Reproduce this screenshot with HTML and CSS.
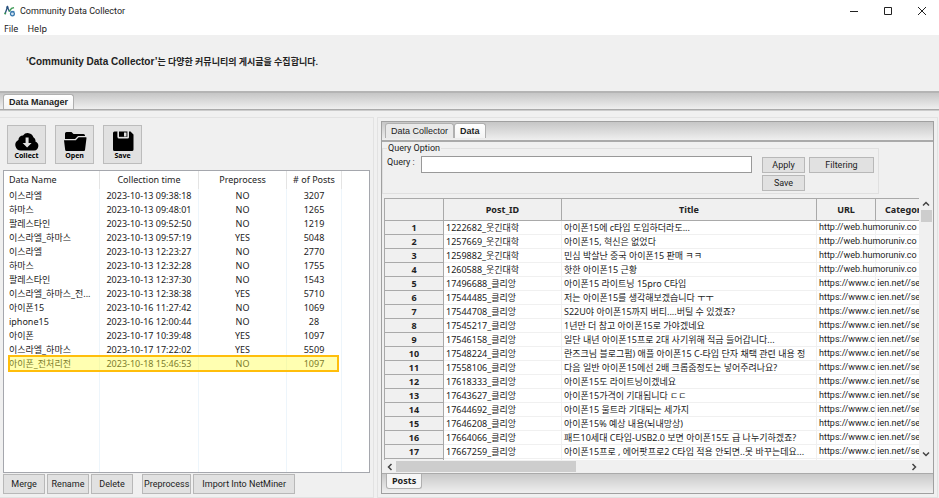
FILE: index.html
```html
<!DOCTYPE html>
<html lang="ko">
<head>
<meta charset="utf-8">
<title>Community Data Collector</title>
<link rel="stylesheet" href="styles.css">
</head>
<body>
<header class="titlebar">
  <svg class="logo" viewBox="0 0 12 12" aria-hidden="true">
    <path d="M1 9 L3.4 2 L5.4 6.6" fill="none" stroke="#27507c" stroke-width="1.3"/>
    <path d="M5 6.500L7.600 3.400 10 2.600" fill="none" stroke="#3d9a55" stroke-width="1.4"/>
    <circle cx="3.4" cy="2.2" r="1.1" fill="#27507c"/>
    <circle cx="1.200" cy="8.600" r="1" fill="#3d9a55"/>
    <circle cx="8.4" cy="8.800" r="2" fill="#cfe2f3" stroke="#3677ac" stroke-width="1.2"/>
    <path d="M6.400 6.400h4" stroke="#3677ac"/>
  </svg>
  <h1 class="app-name">Community Data Collector</h1>
  <div class="window-controls">
    <button type="button" aria-label="Minimize"><svg viewBox="0 0 10 10"><path d="M1 5.5h8"/></svg></button>
    <button type="button" aria-label="Maximize"><svg viewBox="0 0 10 10"><path d="M1.5 1.5h7v7h-7z"/></svg></button>
    <button type="button" aria-label="Close"><svg viewBox="0 0 10 10"><path d="M1 1l8 8M9 1l-8 8"/></svg></button>
  </div>
</header>
<nav class="menu">
  <button type="button">File</button>
  <button type="button">Help</button>
</nav>
<p class="banner"><span class="banner-name">‘Community Data Collector’</span>는 다양한 커뮤니티의 게시글을 수집합니다.</p>
<div class="tabstrip main-tabs">
  <button type="button" class="tab active">Data Manager</button>
</div>
<main class="workspace">
  <section class="manager">
    <div class="toolbar">
      <button type="button" class="tool">
        <svg viewBox="0 0 24 20" aria-hidden="true"><path d="M6 19.5a5.6 5.6 0 0 1-2.600-10.600A4.600 4.600 0 0 1 8 4.400 6 6 0 0 1 18.400 6.200 4 4 0 0 1 20.400 10.500 4.700 4.700 0 0 1 19.300 19.500z"/><path d="M10.600 6.500h3v5.500h3L12.100 16.600 7.600 12h3z" fill="#e1e1e1"/></svg>
        <span>Collect</span>
      </button>
      <button type="button" class="tool">
        <svg viewBox="0 0 24 20" aria-hidden="true"><path d="M2 2.500q0-1.500 1.500-1.500h5l2 2H20.500q1.500 0 1.500 1.500V5H15l-3 3H2zM1 9.200h11.800l2.800-3H23q.6 0 .5.8l-1.500 12q-.1 1-1 1H3.300q-1 0-1.100-1z"/></svg>
        <span>Open</span>
      </button>
      <button type="button" class="tool">
        <svg viewBox="0 0 24 20" aria-hidden="true"><path d="M2 2q0-1.500 1.500-1.500h3V6q0 1.500 1.500 1.500h8.500Q18 7.500 18 6V.5h1.500L22.500 3.500V18.500q0 1.500-1.500 1.500H3.500Q2 20 2 18.500z"/><path d="M8 .5h8.500V6H8z"/><path d="M13 1.500h2.500v4H13z" fill="#e1e1e1"/><path d="M7.200.5v5.800h10V.5" fill="none" stroke="#e1e1e1" stroke-width=".8"/></svg>
        <span>Save</span>
      </button>
    </div>
    <div class="list">
      <table class="datasets">
        <colgroup><col class="c-name"><col class="c-time"><col class="c-pre"><col class="c-posts"><col></colgroup>
        <thead><tr><th>Data Name</th><th>Collection time</th><th>Preprocess</th><th># of Posts</th><th></th></tr></thead>
        <tbody>
          <tr><td>이스라엘</td><td>2023-10-13 09:38:18</td><td>NO</td><td>3207</td><td></td></tr>
          <tr><td>하마스</td><td>2023-10-13 09:48:01</td><td>NO</td><td>1265</td><td></td></tr>
          <tr><td>팔레스타인</td><td>2023-10-13 09:52:50</td><td>NO</td><td>1219</td><td></td></tr>
          <tr><td>이스라엘_하마스</td><td>2023-10-13 09:57:19</td><td>YES</td><td>5048</td><td></td></tr>
          <tr><td>이스라엘</td><td>2023-10-13 12:23:27</td><td>NO</td><td>2770</td><td></td></tr>
          <tr><td>하마스</td><td>2023-10-13 12:32:28</td><td>NO</td><td>1755</td><td></td></tr>
          <tr><td>팔레스타인</td><td>2023-10-13 12:37:30</td><td>NO</td><td>1543</td><td></td></tr>
          <tr><td>이스라엘_하마스_전...</td><td>2023-10-13 12:38:38</td><td>YES</td><td>5710</td><td></td></tr>
          <tr><td>아이폰15</td><td>2023-10-16 11:27:42</td><td>NO</td><td>1069</td><td></td></tr>
          <tr><td>iphone15</td><td>2023-10-16 12:00:44</td><td>NO</td><td>28</td><td></td></tr>
          <tr><td>아이폰</td><td>2023-10-17 10:39:48</td><td>YES</td><td>1097</td><td></td></tr>
          <tr><td>이스라엘_하마스</td><td>2023-10-17 17:22:02</td><td>YES</td><td>5509</td><td></td></tr>
          <tr class="marked"><td>아이폰_전처리전</td><td>2023-10-18 15:46:53</td><td>NO</td><td>1097</td><td></td></tr>
          <tr class="filler"><td></td><td></td><td></td><td></td><td></td></tr>
        </tbody>
      </table>
    </div>
    <div class="actions">
      <button type="button" class="btn">Merge</button>
      <button type="button" class="btn">Rename</button>
      <button type="button" class="btn">Delete</button>
      <button type="button" class="btn spaced">Preprocess</button>
      <button type="button" class="btn wide">Import Into NetMiner</button>
    </div>
  </section>
  <section class="viewer">
    <div class="folder">
      <div class="tabstrip view-tabs">
        <button type="button" class="tab">Data Collector</button>
        <button type="button" class="tab active">Data</button>
      </div>
      <form class="query">
        <fieldset>
          <legend>Query Option</legend>
          <div class="query-grid">
            <label for="query">Query :</label>
            <input id="query" type="text">
            <button type="button" class="btn">Apply</button>
            <button type="button" class="btn">Filtering</button>
            <button type="button" class="btn save">Save</button>
          </div>
        </fieldset>
      </form>
      <div class="grid-area">
        <div class="grid-view">
          <table class="posts">
            <colgroup><col class="p-num"><col class="p-id"><col><col class="p-url"><col class="p-cat"></colgroup>
            <thead><tr><th></th><th>Post_ID</th><th>Title</th><th>URL</th><th>Category</th></tr></thead>
            <tbody>
              <tr><th>1</th><td>1222682_웃긴대학</td><td>아이폰15에 c타입 도입하더라도...</td><td>http://web.humoruniv.co</td><td></td></tr>
              <tr><th>2</th><td>1257669_웃긴대학</td><td>아이폰15, 혁신은 없었다</td><td>http://web.humoruniv.co</td><td></td></tr>
              <tr><th>3</th><td>1259882_웃긴대학</td><td>민심 박살난 중국 아이폰15 판매 ㅋㅋ</td><td>http://web.humoruniv.co</td><td></td></tr>
              <tr><th>4</th><td>1260588_웃긴대학</td><td>핫한 아이폰15 근황</td><td>http://web.humoruniv.co</td><td></td></tr>
              <tr><th>5</th><td>17496688_클리앙</td><td>아이폰15 라이트닝 15pro C타입</td><td>https://www.c ien.net//se</td><td></td></tr>
              <tr><th>6</th><td>17544485_클리앙</td><td>저는 아이폰15를 생각해보겠습니다 ㅜㅜ</td><td>https://www.c ien.net//se</td><td></td></tr>
              <tr><th>7</th><td>17544708_클리앙</td><td>S22U야 아이폰15까지 버티....버틸 수 있겠죠?</td><td>https://www.c ien.net//se</td><td></td></tr>
              <tr><th>8</th><td>17545217_클리앙</td><td>1년만 더 참고 아이폰15로 가야겠네요</td><td>https://www.c ien.net//se</td><td></td></tr>
              <tr><th>9</th><td>17546158_클리앙</td><td>일단 내년 아이폰15프로 2대 사기위해 적금 들어갑니다...</td><td>https://www.c ien.net//se</td><td></td></tr>
              <tr><th>10</th><td>17548224_클리앙</td><td>란즈크님 블로그펌) 애플 아이폰15 C-타입 단자 채택 관련 내용 정</td><td>https://www.c ien.net//se</td><td></td></tr>
              <tr><th>11</th><td>17558106_클리앙</td><td>다음 일반 아이폰15에선 2배 크롭줌정도는 넣어주려나요?</td><td>https://www.c ien.net//se</td><td></td></tr>
              <tr><th>12</th><td>17618333_클리앙</td><td>아이폰15도 라이트닝이겠네요</td><td>https://www.c ien.net//se</td><td></td></tr>
              <tr><th>13</th><td>17643627_클리앙</td><td>아이폰15가격이 기대됩니다 ㄷㄷ</td><td>https://www.c ien.net//se</td><td></td></tr>
              <tr><th>14</th><td>17644692_클리앙</td><td>아이폰15 울트라 기대되는 세가지</td><td>https://www.c ien.net//se</td><td></td></tr>
              <tr><th>15</th><td>17646208_클리앙</td><td>아이폰15% 예상 내용(뇌내망상)</td><td>https://www.c ien.net//se</td><td></td></tr>
              <tr><th>16</th><td>17664066_클리앙</td><td>패드10세대 C타입-USB2.0 보면 아이폰15도 급 나누기하겠죠?</td><td>https://www.c ien.net//se</td><td></td></tr>
              <tr><th>17</th><td>17667259_클리앙</td><td>아이폰15프로 , 에어팟프로2 C타입 적용 안되면..못 바꾸는데요...</td><td>https://www.c ien.net//se</td><td></td></tr>
              <tr><th></th><td></td><td></td><td></td><td></td></tr>
            </tbody>
          </table>
        </div>
        <div class="scroll vertical">
          <svg viewBox="0 0 8 8"><path d="M1 5.500l3-3 3 3"/></svg>
          <div class="thumb"></div>
          <svg viewBox="0 0 8 8"><path d="M1 2.500l3 3 3-3"/></svg>
        </div>
        <div class="scroll horizontal">
          <svg viewBox="0 0 8 8"><path d="M5.500 1l-3 3 3 3"/></svg>
          <div class="thumb"></div>
          <svg viewBox="0 0 8 8"><path d="M2.500 1l3 3-3 3"/></svg>
        </div>
      </div>
      <div class="sheet-tabs">
        <button type="button" class="sheet">Posts</button>
      </div>
    </div>
  </section>
</main>
</body>
</html>
```
FILE: styles.css
```css
* { box-sizing: border-box; }

body {
  margin: 0;
  height: 100vh;
  display: flex;
  flex-direction: column;
  background: #f0f0f0;
  color: #222;
  font: 9px/14px Roboto, "Noto Sans CJK KR", sans-serif;
}

button, input {
  font: inherit;
  color: inherit;
  margin: 0;
  padding: 0;
  border: 0;
  background: none;
}

svg { display: block; }

/* Window frame */
.titlebar {
  display: flex;
  flex: none;
  align-items: center;
  height: 22px;
  padding-left: 4px;
  gap: 4px;
  background: #fff;
}
.logo { width: 12px; height: 12px; }
.app-name { margin: 0; font-size: 9px; font-weight: 400; }
.window-controls { display: flex; margin-left: auto; }
.window-controls button { width: 34px; height: 22px; display: grid; place-items: center; }
.window-controls svg { width: 10px; height: 10px; fill: none; stroke: #222; }

.menu {
  display: flex;
  flex: none;
  gap: 9px;
  height: 13px;
  padding-left: 4px;
  line-height: 13px;
  background: #fff;
  font-family: "Noto Sans", sans-serif;
}

.banner {
  flex: none;
  margin: 0;
  height: 56px;
  padding-left: 26px;
  line-height: 54px;
  font-weight: 700;
}
.banner-name { font-family: "Liberation Sans", sans-serif; font-size: 10px; }

/* Tab strips */
.tabstrip {
  display: flex;
  flex: none;
  align-items: flex-end;
  background: linear-gradient(#c6c6c6, #efefef);
  border-bottom: 1px solid #aaa;
  font-family: "Liberation Sans", sans-serif;
}
.main-tabs {
  height: 19px;
  padding: 2px 3px 0;
  border-top: 2px solid #b4b4b4;
}
.tab {
  height: 15px;
  padding: 0 5px;
  border: 1px solid #b0b0b0;
  border-bottom: 0;
  border-radius: 3px 3px 0 0;
  background: #e9e9e9;
}
.tab.active { background: linear-gradient(#fff, #f4f4f4); font-weight: 700; }

/* Panels */
.workspace {
  flex: 1;
  min-height: 0;
  display: grid;
  grid-template: minmax(0, 1fr) / minmax(0, 2fr) minmax(0, 3fr);
  gap: 3px;
  padding: 6px 1px 0 0;
  border-top: 1px solid #ccc;
}
.manager {
  display: flex;
  flex-direction: column;
  padding: 7px 3px 3px;
  border: 1px solid #e2e2e2;
  border-left: 0;
}
.toolbar { display: flex; gap: 9px; padding: 0 4px 6px; }
.tool {
  width: 39px;
  height: 39px;
  display: flex;
  flex-direction: column;
  align-items: center;
  padding-top: 5px;
  border: 1px solid #bcbcbc;
  background: #e1e1e1;
  font-family: "Open Sans", sans-serif;
  font-size: 7px;
  font-weight: 700;
  line-height: 9px;
  color: #000;
}
.tool svg { width: 24px; height: 20px; }

.list {
  flex: 1;
  display: flex;
  border: 1px solid #a5a7ad;
  background: #fff;
}
.datasets { width: 100%; height: 100%; table-layout: fixed; border-collapse: separate; border-spacing: 0; }
.datasets th, .datasets td {
  height: 14px;
  padding: 0;
  border-right: 1px solid #edf5fb;
  font-family: "Noto Sans", "Noto Sans CJK KR", sans-serif;
  font-weight: 400;
  text-align: center;
  white-space: nowrap;
}
.datasets th { height: 18px; border-color: #e4e4e4; }
.datasets th:first-child, .datasets td:first-child { padding-left: 5px; text-align: left; }
.datasets th:last-child, .datasets td:last-child { border-right: 0; }
.datasets .filler td { height: auto; }
.c-name { width: 96px; }
.c-time { width: 99px; }
.c-pre { width: 88px; }
.c-posts { width: 55px; }
.marked { position: relative; }
.marked::after {
  content: "";
  position: absolute;
  inset: -2px 30px -1px 4px;
  border: 2px solid #ffbe0b;
  background: rgba(255, 255, 60, 0.4);
}

.btn {
  height: 16px;
  padding: 0 6px;
  border: 1px solid #b8b8b8;
  background: #e1e1e1;
  line-height: 14px;
}
.actions { display: flex; gap: 2px; padding-top: 1px; }
.actions .btn { min-width: 42px; height: 20px; padding: 0 1px; }
.actions .btn.spaced { margin-left: 7px; }
.actions .btn.wide { padding: 0 8px; }

/* Viewer */
.viewer {
  display: flex;
  padding: 3px;
  border: 1px solid #e2e2e2;
}
.folder {
  flex: 1;
  min-width: 0;
  display: flex;
  flex-direction: column;
  border: 1px solid #a0a0a0;
}
.view-tabs {
  height: 20px;
  padding: 0 3px 2px;
  border-bottom: 2px solid #aaa;
}

.query { margin: 0 54px 4px 0; }
fieldset { min-width: 0; margin: 0; padding: 2px 4px; border: 1px solid #e0e0e0; }
legend { padding: 0 1px; line-height: 12px; }
.query-grid {
  display: grid;
  grid-template-columns: 28px 1fr 43px 65px;
  gap: 2px 4px;
  align-items: center;
}
.query-grid label { align-self: start; line-height: 12px; white-space: nowrap; }
.query-grid input {
  height: 17px;
  margin: 0 6px 0 2px;
  padding: 0 4px;
  border: 1px solid #999;
  background: #fff;
}
.query-grid .save { grid-column: 3; }

.grid-area {
  flex: 1;
  min-height: 0;
  margin-left: 2px;
  display: grid;
  grid-template: minmax(0, 1fr) 13px / minmax(0, 1fr) 14px;
}
.grid-view {
  overflow: hidden;
  border-top: 1px solid #a9a9a9;
  border-left: 1px solid #a9a9a9;
  background: #fff;
}
.posts { width: 100%; table-layout: fixed; border-collapse: separate; border-spacing: 0; }
.posts th, .posts td {
  height: 14px;
  padding: 0;
  line-height: 13px;
  white-space: nowrap;
}
.posts th {
  border-right: 1px solid #a9a9a9;
  border-bottom: 1px solid #a9a9a9;
  background: #f0f0f0;
  font-family: "Noto Sans", sans-serif;
  text-align: center;
}
.posts thead th { height: 22px; }
.posts thead th:last-child { padding-left: 9px; border-right: 0; text-align: left; overflow: hidden; }
.posts td {
  padding-left: 2px;
  border-right: 1px solid #f0f0f0;
  border-bottom: 1px solid #f0f0f0;
}
.posts td:nth-child(2), .posts td:nth-child(3) {
  overflow: hidden;
  font-family: "Noto Sans", "Noto Sans CJK KR", sans-serif;
}
.posts td:last-child { border-right: 0; }
.p-num { width: 59px; }
.p-id { width: 118px; }
.p-url { width: 59px; }
.p-cat { width: 43px; }

.scroll { display: flex; align-items: center; background: #f0f0f0; }
.scroll svg { width: 8px; height: 8px; fill: none; stroke: #444; stroke-width: 1.5; }
.scroll .thumb { background: #cdcdcd; }
.vertical { flex-direction: column; padding: 2px 0; }
.vertical .thumb { width: 11px; height: 12px; margin-top: 2px; }
.vertical svg:last-child { margin-top: auto; }
.horizontal { padding: 0 2px; grid-column: 1 / -1; }
.horizontal .thumb { width: 33%; height: 11px; margin-left: 2px; }
.horizontal svg:last-child { margin-left: auto; margin-right: 13px; }

.sheet-tabs {
  flex: none;
  display: flex;
  align-items: flex-start;
  height: 20px;
  padding-left: 4px;
  border-top: 1px solid #aaa;
  background: linear-gradient(#c9c9c9, #efefef);
}
.sheet {
  height: 15px;
  padding: 0 5px;
  border: 1px solid #b0b0b0;
  border-top: 0;
  border-radius: 0 0 3px 3px;
  background: #f6f6f6;
  font-family: "Noto Sans", sans-serif;
  font-weight: 700;
}
```
